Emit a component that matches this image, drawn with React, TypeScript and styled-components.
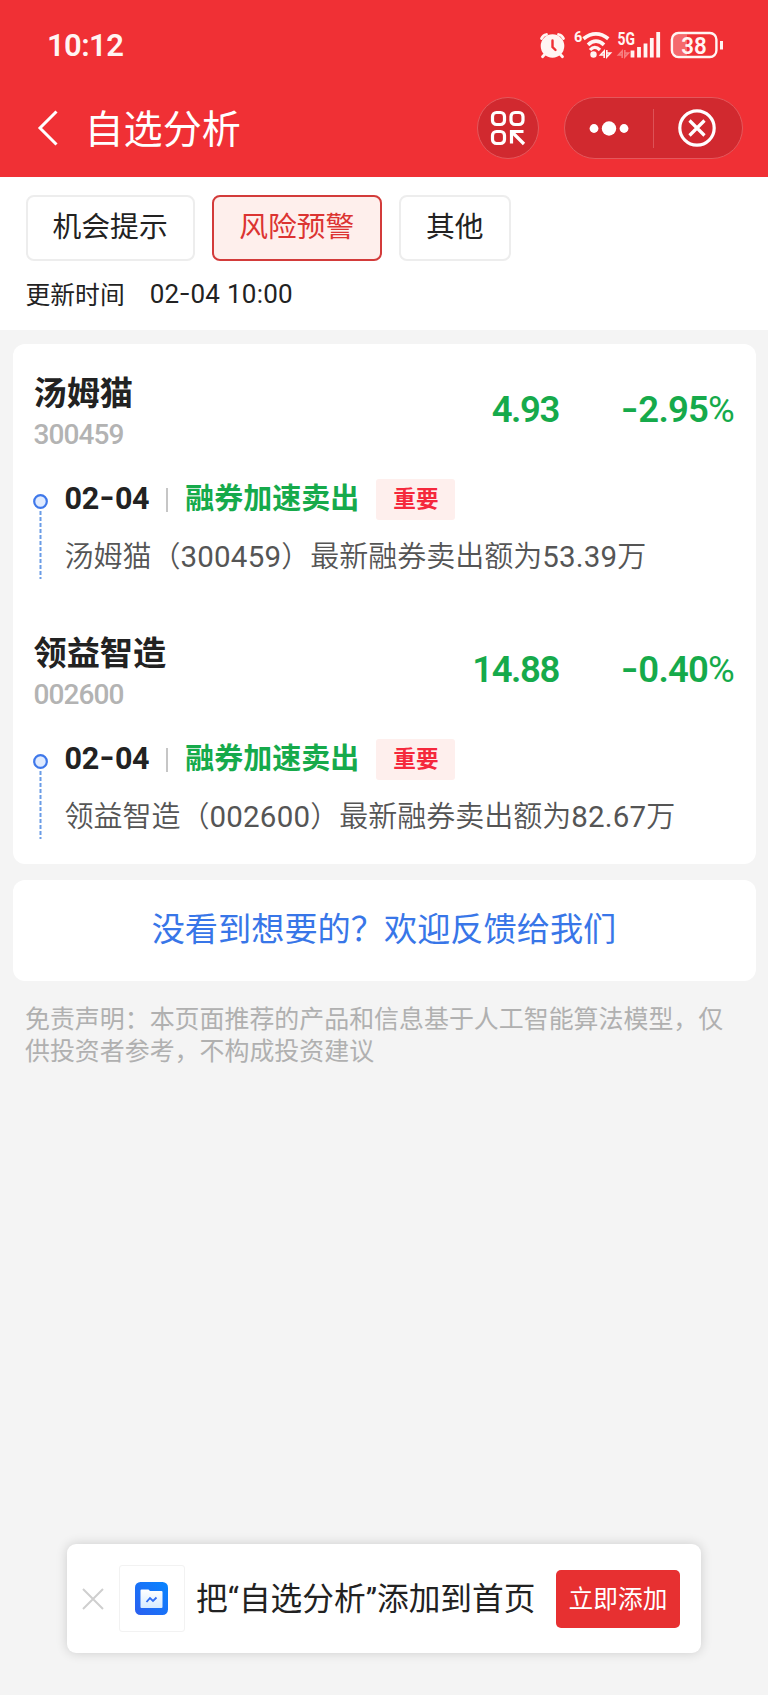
import React from 'react';
import styled, { createGlobalStyle } from 'styled-components';

const CJK = '"Noto Sans CJK SC", sans-serif';
const NUM = 'Roboto, "Noto Sans CJK SC", sans-serif';

const GlobalStyle = createGlobalStyle`
  * { box-sizing: border-box; }
  body { margin: 0; background: #f4f4f4; font-family: ${CJK}; color: #222; }
  button { font: inherit; margin: 0; border: 0; background: none; }
`;

const Page = styled.div`
  display: flex;
  flex-direction: column;
  width: 768px;
  height: 1695px;
  overflow: hidden;
  background: #f4f4f4;
`;

const Digits = styled.span<{ $size: number; $weight?: number; $track?: number }>`
  font-family: ${NUM};
  font-size: ${p => p.$size}px;
  font-weight: ${p => p.$weight ?? 400};
  letter-spacing: ${p => p.$track ?? 0}px;
  white-space: pre;
`;

const Dash = styled.span`
  display: inline-block;
  margin: 0 0.07em;
  transform: translateY(-0.03em) scaleX(1.3);
`;

const Header = styled.header`
  height: 177px;
  background: #f03035;
  color: #fff;
  flex: none;
`;

const StatusBar = styled.div`
  display: flex;
  justify-content: space-between;
  height: 90px;
  padding: 0 43px 0 47px;
  line-height: 91px;
  color: #fff5f3;
`;

const NavBar = styled.div`
  display: flex;
  align-items: center;
  height: 76px;
  padding: 0 25px 0 37px;
`;

const Title = styled.h1`
  flex: 1;
  margin: 0 0 0 25.5px;
  font-size: 39.1px;
  line-height: 76px;
  font-weight: 400;
  padding-bottom: 5px;
`;

const RoundButton = styled.button`
  display: flex;
  align-items: center;
  justify-content: center;
  width: 62px;
  height: 62px;
  padding: 0;
  border: 1px solid #e4585c;
  border-radius: 31px;
  background: #d1292f;
  color: #fff;
`;

const Capsule = styled.div`
  display: flex;
  align-items: center;
  width: 179px;
  height: 62px;
  margin-left: 25px;
  border: 1px solid #e4585c;
  border-radius: 31px;
  background: #d1292f;
`;

const CapsuleHalf = styled.div`
  flex: 1;
  display: flex;
  justify-content: center;
  padding-right: 1px;
`;

const CapsuleLine = styled.div`
  width: 1px;
  height: 39px;
  margin-left: -1px;
  background: #dd5257;
`;

const FilterPanel = styled.section`
  flex: none;
  height: 153px;
  padding: 18px 25px 0 25.5px;
  background: #fff;
`;

const Tabs = styled.div`
  display: flex;
  gap: 17px;
`;

const Tab = styled.button<{ $active?: boolean }>`
  height: 66px;
  padding: 0 25.5px 6px 25px;
  border: 2px solid ${p => (p.$active ? '#d33b3a' : '#ededed')};
  border-radius: 8px;
  background: ${p => (p.$active ? '#feefec' : '#fff')};
  color: ${p => (p.$active ? '#dc3432' : '#222')};
  font-size: 28.8px;
  line-height: 56px;
  white-space: nowrap;
`;

const Updated = styled.div`
  display: flex;
  gap: 25px;
  margin-top: 13px;
  font-size: 24.8px;
  line-height: 38px;

  ${Digits} {
    line-height: 40px;
  }
`;

const Card = styled.section`
  flex: none;
  margin: 14px 12.5px 0;
  border-radius: 12px;
  background: #fff;
`;

const StockCard = styled(Card)`
  height: 519.5px;
`;

const Stock = styled.article`
  height: 260px;
  padding: 27px 21.5px 0 21px;
`;

const Quote = styled.div`
  display: flex;
  align-items: center;
  color: #16aa4b;
  height: 77px;
`;

const Identity = styled.div`
  flex: 1;
  display: flex;
  flex-direction: column;
  padding-top: 5px;
  color: #222;
`;

const Name = styled.h2`
  margin: 0;
  font-size: 33.2px;
  line-height: 39px;
  font-weight: 700;
`;

const Code = styled.div`
  margin-top: 8px;
  line-height: 33px;
  color: #b3b3b3;
`;

const Change = styled.div`
  width: 175px;
  text-align: right;
`;

const Event = styled.div`
  display: flex;
  margin-top: 31px;
`;

const Rail = styled.div`
  flex: none;
  width: 15px;
  height: 101px;
  margin: 15px 17px 0 -1px;
`;

const EventBody = styled.div`
  flex: 1;
`;

const EventHead = styled.div`
  display: flex;
  align-items: center;
  height: 41px;

  > ${Digits} {
    padding-bottom: 2px;
  }
`;

const Bar = styled.div`
  width: 2px;
  height: 24px;
  margin: 0 17px 0 17px;
  background: #c6c6c6;
`;

const Signal = styled.div`
  font-size: 29px;
  font-weight: 700;
  line-height: 38px;
  color: #16aa4b;
  padding-bottom: 7px;
`;

const Tag = styled.div`
  width: 79px;
  height: 41px;
  margin-left: 17px;
  padding-left: 17px;
  border-radius: 3px;
  background: #feefed;
  color: #f5283c;
  font-size: 22.6px;
  font-weight: 700;
  line-height: 37px;
`;

const Detail = styled.p`
  margin: 13px 0 0;
  font-size: 29px;
  line-height: 42px;
  font-weight: 350;
  color: #555;
  white-space: nowrap;
`;

const Feedback = styled(Card)`
  margin-top: 16.5px;
  height: 100.5px;
  text-align: center;
  font-size: 33.2px;
  line-height: 94px;
  color: #3876e8;
`;

const Disclaimer = styled.p`
  margin: 21.5px 25px 0;
  font-size: 24.95px;
  line-height: 31.8px;
  color: #b0b0b0;
`;

const Prompt = styled.aside`
  flex: none;
  display: flex;
  align-items: center;
  width: 634.5px;
  height: 109px;
  margin: auto 0 42px 66.5px;
  padding: 0 21px 0 15px;
  border-radius: 9px;
  background: #fff;
  box-shadow: 0 0 12px rgba(0, 0, 0, 0.16);
`;

const AppIcon = styled.div`
  display: flex;
  align-items: center;
  justify-content: center;
  width: 66px;
  height: 67px;
  margin-left: 15px;
  border: 1px solid #f2f2f2;
  border-radius: 3px;
`;

const PromptText = styled.div`
  flex: 1;
  margin-left: 11.5px;
  padding-top: 3px;
  font-family: ${NUM};
  font-size: 31.7px;
  line-height: 44px;
  white-space: nowrap;
`;

const AddButton = styled.button`
  width: 124px;
  height: 58px;
  padding: 0 0 4px;
  border-radius: 5px;
  background: #e73031;
  color: #fff;
  font-size: 24.7px;
  line-height: 54px;
`;

const StatusSvg = styled.svg`
  margin-top: 25px;
`;

const StatusIcons = () => (
  <StatusSvg width="190" height="40" viewBox="535 25 190 40" fill="none" stroke="#fff5f3">
    <g strokeWidth="2.800" strokeLinecap="round">
      <circle cx="552.500" cy="46" r="11.800" fill="#fff5f3" stroke="none" />
      <path d="M541.500 38.500Q543 35.200 546.500 34.500M563.500 38.500Q562 35.200 558.500 34.500M545 54l-2.500 2.800M560 54l2.500 2.800" />
      <path d="M552.500 40.500v6.500l3 3" stroke="#f03035" strokeWidth="2.400" />
    </g>
    <text x="574" y="42" fontFamily="Roboto" fontSize="14.500" fontWeight="700" fill="#fff5f3" stroke="none">6</text>
    <path d="M583.500 38.800Q596 29 608.300 38.800M588 44.800Q596 37.500 604 44.800" strokeWidth="3.700" />
    <path d="M590 50Q594.800 44.800 600 50" strokeWidth="3.300" />
    <circle cx="593.500" cy="54.500" r="3.200" fill="#fff5f3" stroke="none" />
    <path d="M604.200 58V51L600.500 55H604.200M606.800 50v7l3.700-4H606.800" strokeWidth="1.600" />
    <text x="617.500" y="44.800" fontFamily="Roboto" fontSize="17.500" fontWeight="700" fill="#fff5f3" stroke="none" textLength="17.500" lengthAdjust="spacingAndGlyphs">5G</text>
    <path d="M622.200 58V51L618.500 55H622.200M624.800 50v7l3.700-4H624.800" strokeWidth="1.600" opacity=".4" />
    <path d="M632.500 57.500v-7M639 57.500v-10.500M645.500 57.500v-14M651.800 57.500v-19.500M658.200 57.500v-25.500" strokeWidth="3.800" />
    <path d="M676 34.500h11v21h-11a3 3 0 0 1-3-3v-15a3 3 0 0 1 3-3z" fill="#f5696d" stroke="none" />
    <rect x="671.900" y="33" width="44.500" height="24" rx="6.500" strokeWidth="2.400" />
    <path d="M721.500 41v8.500" strokeWidth="3" />
    <text x="694" y="53.500" fontFamily="Roboto" fontSize="24" fontWeight="600" fill="#fff5f3" stroke="none" textAnchor="middle" textLength="25.500" lengthAdjust="spacingAndGlyphs">38</text>
  </StatusSvg>
);

const BackIcon = () => (
  <svg width="22" height="38" viewBox="0 0 22 38" fill="none" stroke="#fff" strokeWidth="3">
    <path d="M19.500 2.500L3 19l16.500 16.500" />
  </svg>
);

const ScanIcon = () => (
  <svg width="36" height="36" viewBox="0 0 36 36" fill="none" stroke="#fff" strokeWidth="3.200">
    <rect x="2.500" y="2.500" width="12" height="12" rx="4" />
    <rect x="21" y="2.500" width="12" height="12" rx="4" />
    <rect x="2.500" y="21.500" width="12" height="12" rx="4" />
    <path d="M21.500 33.500V21.500H33.500M22 22l12 12" />
  </svg>
);

const DotsIcon = () => (
  <svg width="40" height="16" viewBox="0 0 40 16" fill="#fff">
    <circle cx="5" cy="8.500" r="4.400" />
    <circle cx="20" cy="8.500" r="7.200" />
    <circle cx="35" cy="8.500" r="4.400" />
  </svg>
);

const CloseIcon = () => (
  <svg width="40" height="40" viewBox="0 0 40 40" fill="none" stroke="#fff" strokeWidth="3.200">
    <circle cx="20" cy="20" r="17.200" />
    <path d="M12.500 12.500l15 15M27.500 12.500l-15 15" />
  </svg>
);

const RailIcon = () => (
  <svg width="15" height="101" viewBox="0 0 15 101" fill="none" display="block">
    <path d="M7.500 17v68" stroke="#6a9ce6" strokeWidth="2" strokeDasharray="4 2" />
    <circle cx="7.500" cy="7.500" r="6.300" fill="#e0ebff" stroke="#3f78ea" strokeWidth="2.200" />
  </svg>
);

const DismissIcon = () => (
  <svg width="22" height="22" viewBox="0 0 22 22" stroke="#cfcfcf" strokeWidth="2">
    <path d="M1 1l20 20M21 1L1 21" />
  </svg>
);

const FolderIcon = () => (
  <svg width="33" height="33" viewBox="0 0 33 33" fill="none">
    <defs>
      <linearGradient id="tile" x1="1" y1="0" x2="0" y2="1">
        <stop offset="0" stopColor="#0785ff" />
        <stop offset="1" stopColor="#2b5ff0" />
      </linearGradient>
      <linearGradient id="folder" x1="0" y1="0" x2="0" y2="1">
        <stop offset="0" stopColor="#fff" />
        <stop offset="1" stopColor="#d6ebff" />
      </linearGradient>
    </defs>
    <rect width="33" height="33" rx="5.500" fill="url(#tile)" />
    <path d="M5.500 8.500Q5.500 7.500 6.500 7.500h7l1.500 1.500h11.500q1 0 1 1v15q0 1-1 1H6.500q-1 0-1-1z" fill="url(#folder)" />
    <path d="M11.500 20l3.500-4 3 3 3.500-3.500" stroke="#2d6cf3" strokeWidth="1.800" />
  </svg>
);

interface StockData {
  name: string;
  code: string;
  price: string;
  drop: string;
  amount: string;
}

const stocks: StockData[] = [
  { name: '汤姆猫', code: '300459', price: '4.93', drop: '2.95', amount: '53.39' },
  { name: '领益智造', code: '002600', price: '14.88', drop: '0.40', amount: '82.67' },
];

const StockItem = ({ name, code, price, drop, amount }: StockData) => (
  <Stock>
    <Quote>
      <Identity>
        <Name>{name}</Name>
        <Code><Digits $size={28} $weight={500} $track={-0.9}>{code}</Digits></Code>
      </Identity>
      <Digits $size={36.5} $weight={600} $track={-1.4}>{price}</Digits>
      <Change>
        <Digits $size={36.5} $weight={600} $track={-0.8}><Dash>-</Dash>{drop}</Digits>
        <Digits $size={36.5} $weight={400} $track={-0.8}>%</Digits>
      </Change>
    </Quote>
    <Event>
      <Rail><RailIcon /></Rail>
      <EventBody>
        <EventHead>
          <Digits $size={30.5} $weight={700} $track={-0.3}>02<Dash>-</Dash>04</Digits>
          <Bar />
          <Signal>融券加速卖出</Signal>
          <Tag>重要</Tag>
        </EventHead>
        <Detail>
          {name}（<Digits $size={29.5} $track={0.2}>{code}</Digits>）最新融券卖出额为<Digits $size={29.5} $track={0.2}>{amount}</Digits>万
        </Detail>
      </EventBody>
    </Event>
  </Stock>
);

export default function App() {
  return (
    <Page>
      <GlobalStyle />
      <Header>
        <StatusBar>
          <Digits $size={31} $weight={600} $track={-0.6}>10:12</Digits>
          <StatusIcons />
        </StatusBar>
        <NavBar>
          <BackIcon />
          <Title>自选分析</Title>
          <RoundButton aria-label="扫一扫"><ScanIcon /></RoundButton>
          <Capsule>
            <CapsuleHalf><DotsIcon /></CapsuleHalf>
            <CapsuleLine />
            <CapsuleHalf><CloseIcon /></CapsuleHalf>
          </Capsule>
        </NavBar>
      </Header>
      <FilterPanel>
        <Tabs>
          <Tab>机会提示</Tab>
          <Tab $active>风险预警</Tab>
          <Tab>其他</Tab>
        </Tabs>
        <Updated>
          <span>更新时间</span>
          <Digits $size={26} $track={0.25}>02<Dash>-</Dash>04 10:00</Digits>
        </Updated>
      </FilterPanel>
      <StockCard>
        {stocks.map(s => <StockItem key={s.code} {...s} />)}
      </StockCard>
      <Feedback>没看到想要的？欢迎反馈给我们</Feedback>
      <Disclaimer>免责声明：本页面推荐的产品和信息基于人工智能算法模型，仅供投资者参考，不构成投资建议</Disclaimer>
      <Prompt>
        <DismissIcon />
        <AppIcon><FolderIcon /></AppIcon>
        <PromptText>把“自选分析”添加到首页</PromptText>
        <AddButton>立即添加</AddButton>
      </Prompt>
    </Page>
  );
}
